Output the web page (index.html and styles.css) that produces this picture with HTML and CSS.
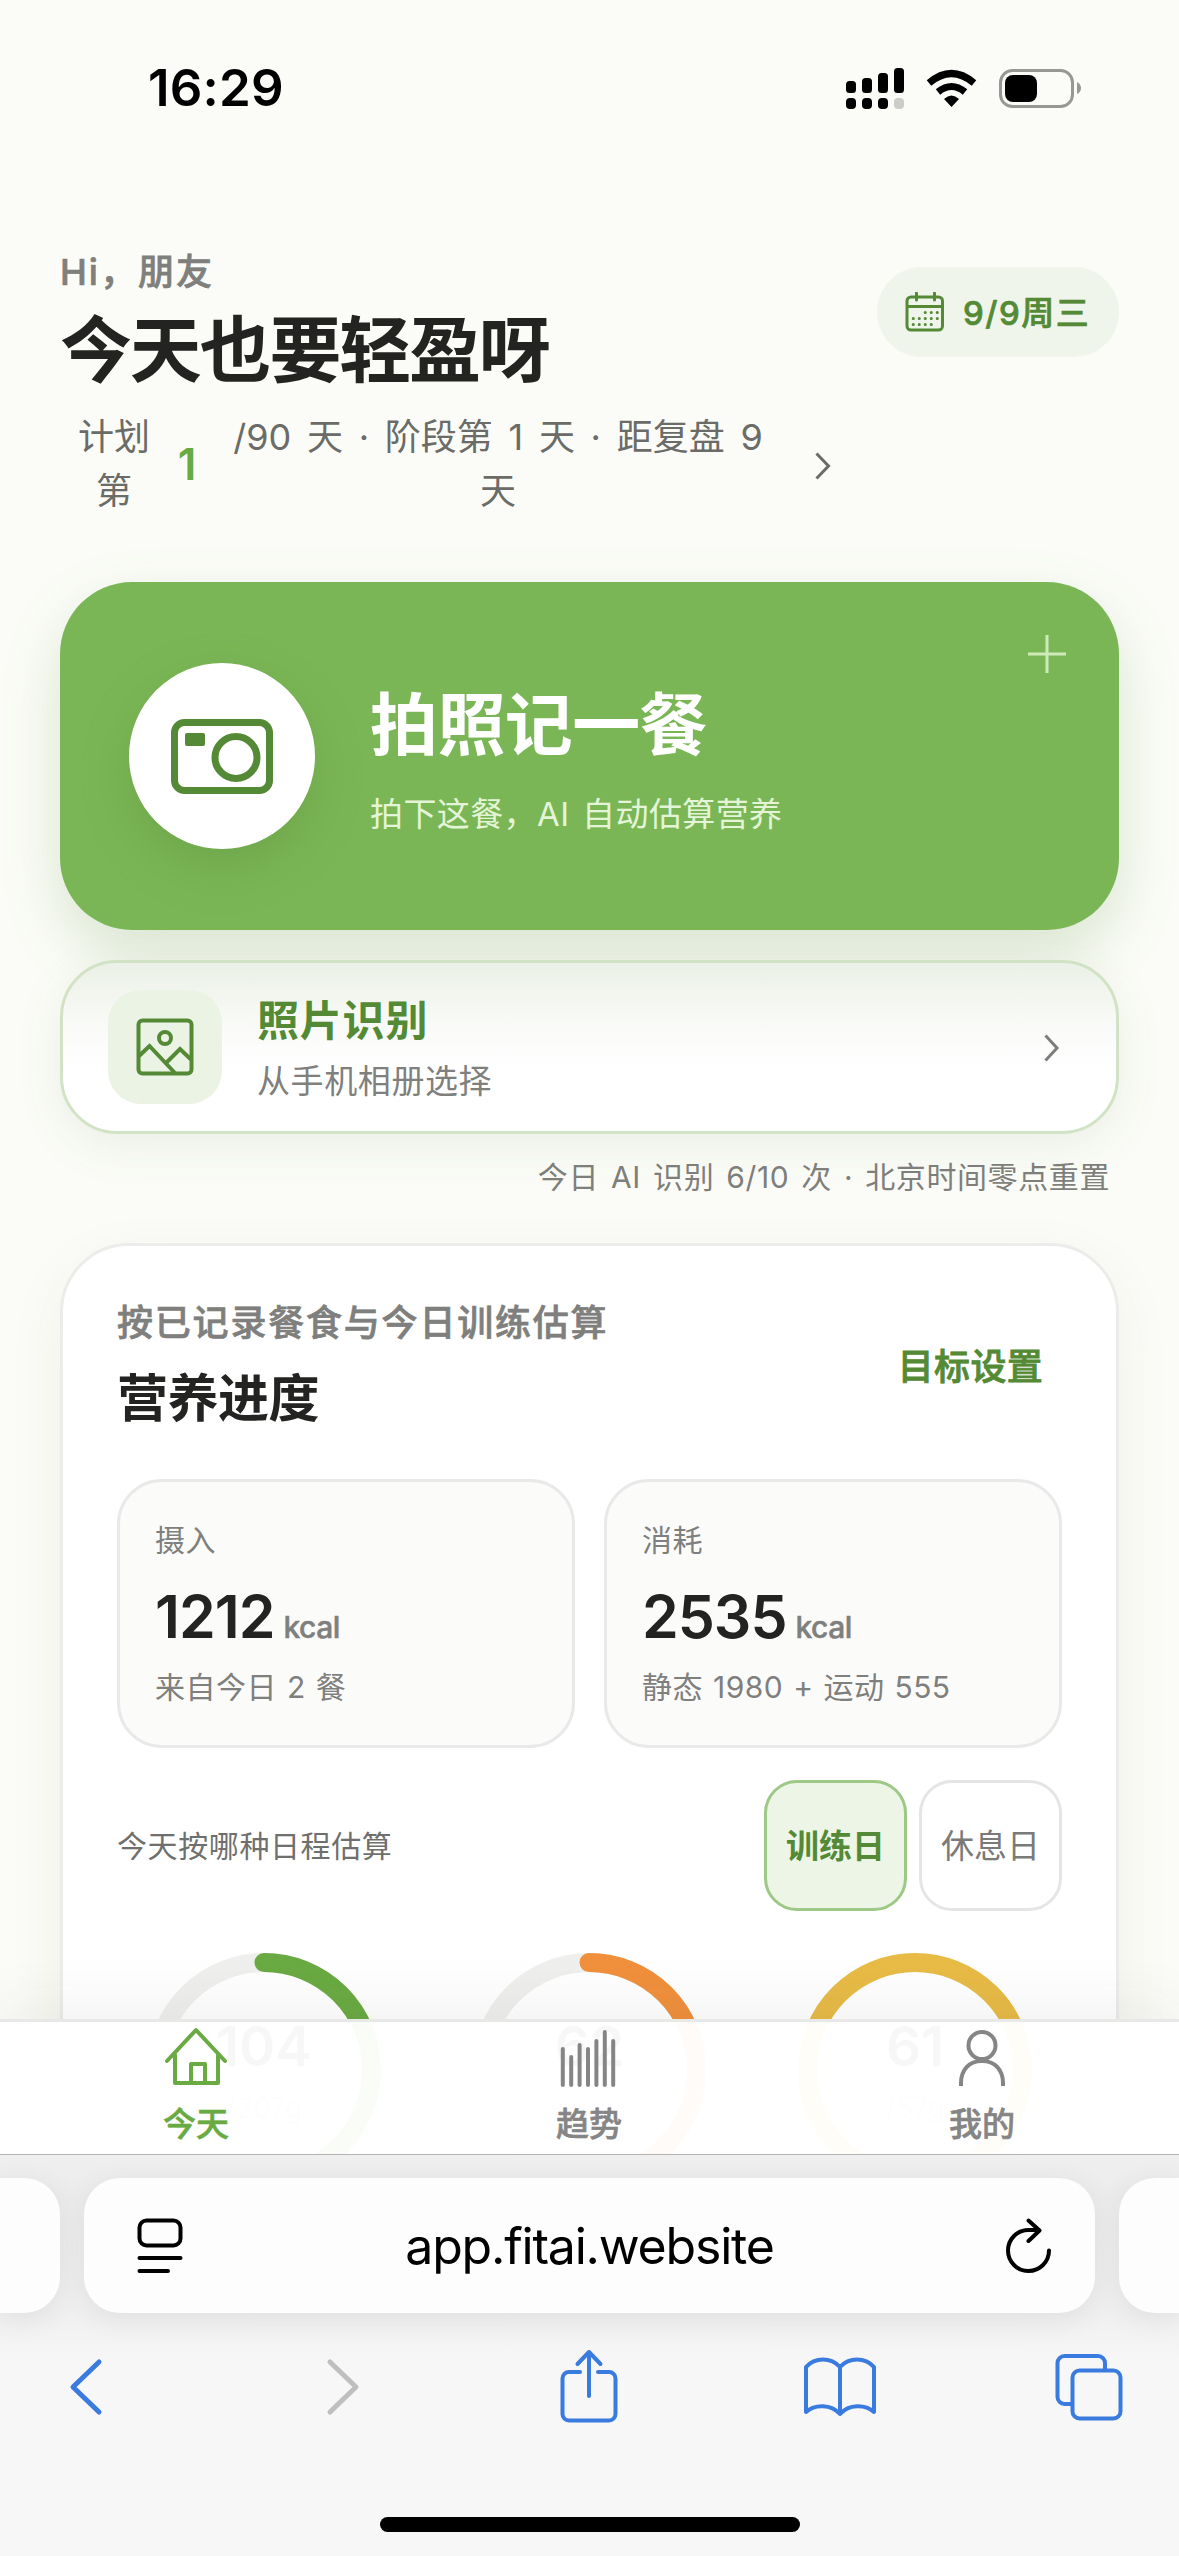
FILE: index.html
```html
<!DOCTYPE html>
<html lang="zh-CN">
<head>
<meta charset="utf-8">
<title>今天</title>
<link rel="stylesheet" href="styles.css">
</head>
<body>
<div class="app">
  <div class="status">
    <span class="time">16:29</span>
    <svg class="status-icons" width="236" height="42" viewBox="0 0 236 42">
      <g fill="#000">
        <rect x="0" y="14" width="10" height="12" rx="3.5"/><rect x="16" y="11" width="10" height="15" rx="3.5"/>
        <rect x="32" y="6" width="10" height="20" rx="3.5"/><rect x="48" y="1" width="10" height="25" rx="3.5"/>
        <rect x="0" y="31" width="10" height="11" rx="4"/><rect x="16" y="31" width="10" height="11" rx="4"/>
        <rect x="32" y="31" width="10" height="11" rx="4"/><rect x="48" y="31" width="10" height="11" rx="4" fill="#ccccca"/>
      </g>
      <g fill="none" stroke="#000" stroke-width="7">
        <path d="M83 16 Q105.500 -3 128 16"/><path d="M92 25 Q105.500 14 119 25"/>
      </g>
      <path d="M98 32 Q105.500 25 113 32 L105.500 40z"/>
      <rect x="154.500" y="3.500" width="72" height="36" rx="12" fill="none" stroke="#979795" stroke-width="3"/>
      <rect x="159" y="8" width="32" height="27" rx="8"/>
      <path d="M231 15 Q235 17 235 21 Q235 25 231 27z" fill="#979795"/>
    </svg>
  </div>

  <header class="header">
    <div class="greeting">
      <p class="hi">Hi，朋友</p>
      <h1 class="headline">今天也要轻盈呀</h1>
      <div class="plan">
        <span class="plan-label">计划第</span>
        <strong class="plan-day">1</strong>
        <span class="plan-text">/90 天 · 阶段第 1 天 · 距复盘 9 天</span>
        <svg class="plan-arrow" width="17" height="30" viewBox="0 0 17 30"><path d="M2.500 2.500 14.500 15 2.500 27.500" fill="none" stroke="#6b6b68" stroke-width="3"/></svg>
      </div>
    </div>
    <div class="date-pill">
      <svg width="40" height="40" viewBox="0 0 40 40" fill="none" stroke="#548a35" stroke-width="3">
        <rect x="2" y="5" width="35.500" height="33" rx="4"/><path d="M2 14.500H37.500"/><path d="M11.500 1V8M29.500 1V8" stroke-linecap="round"/>
        <path d="M20.200 20.500h.1M26.200 20.500h.1M32.200 20.500h.1M8.200 26.500h.1M14.200 26.500h.1M20.200 26.500h.1M26.200 26.500h.1M32.200 26.500h.1M8.200 32.500h.1M14.200 32.500h.1M20.200 32.500h.1M26.200 32.500h.1" stroke-linecap="round"/>
      </svg>
      <span>9/9周三</span>
    </div>
  </header>

  <section class="capture">
    <div class="capture-icon">
      <svg width="102" height="75" viewBox="0 0 102 75" fill="none" stroke="#548a35" stroke-width="7">
        <rect x="3.500" y="3.500" width="95" height="68" rx="10"/><circle cx="65" cy="38.500" r="21"/>
        <rect x="14" y="14" width="20" height="13" rx="2" fill="#548a35" stroke="none"/>
      </svg>
    </div>
    <div class="capture-copy">
      <h2 class="capture-title">拍照记一餐</h2>
      <p class="capture-sub">拍下这餐，AI 自动估算营养</p>
    </div>
    <svg class="capture-plus" width="40" height="40" viewBox="0 0 40 40"><path d="M20 1V39M1 20H39" stroke="#cdeab8" stroke-width="3"/></svg>
  </section>

  <section class="album">
    <div class="album-icon">
      <svg width="58" height="58" viewBox="0 0 58 58" fill="none" stroke="#548a35" stroke-width="4">
        <rect x="2.500" y="2.500" width="53" height="53" rx="4"/><circle cx="29" cy="20" r="6"/>
        <path d="M3 38 13.500 28 39 55M30 45 44 31 55 41.500"/>
      </svg>
    </div>
    <div class="album-copy">
      <h3 class="album-title">照片识别</h3>
      <p class="album-sub">从手机相册选择</p>
    </div>
    <svg class="album-arrow" width="17" height="30" viewBox="0 0 17 30"><path d="M2.500 2.500 14 15 2.500 27.500" fill="none" stroke="#7d7d7b" stroke-width="3"/></svg>
  </section>
  <p class="quota">今日 AI 识别 6/10 次 · 北京时间零点重置</p>

  <section class="nutrition">
    <div class="nutrition-head">
      <div>
        <p class="nutrition-note">按已记录餐食与今日训练估算</p>
        <h2 class="nutrition-title">营养进度</h2>
      </div>
      <a class="goal-link">目标设置</a>
    </div>
    <div class="stats">
      <div class="stat">
        <p class="stat-text">摄入</p>
        <p class="stat-value">1212<small>kcal</small></p>
        <p class="stat-text">来自今日 2 餐</p>
      </div>
      <div class="stat">
        <p class="stat-text">消耗</p>
        <p class="stat-value">2535<small>kcal</small></p>
        <p class="stat-text">静态 1980 + 运动 555</p>
      </div>
    </div>
    <div class="schedule">
      <span class="schedule-label">今天按哪种日程估算</span>
      <div class="toggle">
        <button class="choice choice-on">训练日</button>
        <button class="choice">休息日</button>
      </div>
    </div>
    <div class="rings">
      <div class="ring">
        <svg width="234" height="234" viewBox="0 0 234 234" fill="none" stroke-width="19"><circle cx="117" cy="117" r="107.500" stroke="#efefed"/><path d="M117 9.500A107.500 107.500 0 0 1 117 224.500" stroke="#6aaa42" stroke-linecap="round"/></svg>
        <div class="ring-text"><b>104</b><small>/207g</small></div>
      </div>
      <div class="ring">
        <svg width="234" height="234" viewBox="0 0 234 234" fill="none" stroke-width="19"><circle cx="117" cy="117" r="107.500" stroke="#efefed"/><path d="M117 9.500A107.500 107.500 0 0 1 117 224.500" stroke="#f0903c" stroke-linecap="round"/></svg>
        <div class="ring-text"><b>62</b></div>
      </div>
      <div class="ring">
        <svg width="234" height="234" viewBox="0 0 234 234" fill="none" stroke-width="19"><circle cx="117" cy="117" r="107.500" stroke="#e8bb46"/></svg>
        <div class="ring-text"><b>61</b><small>/57g</small></div>
      </div>
    </div>
  </section>

  <nav class="tabs">
    <a class="tab tab-on">
      <svg width="64" height="60" viewBox="0 0 64 60" fill="none" stroke="#6aaa42" stroke-width="4" stroke-linecap="round" stroke-linejoin="round"><path d="M3 34 32 3 61 34M11 28V56H54V28M27 56V37H41V56"/></svg>
      <span>今天</span>
    </a>
    <a class="tab">
      <svg width="64" height="60" viewBox="0 0 64 60" fill="none" stroke="#858585" stroke-width="4" stroke-linecap="round"><path d="M5.800 22V58M14.200 30V58M22.600 18V58M31 22V58M39.400 14V58M47.800 5V58M56.200 14V58"/></svg>
      <span>趋势</span>
    </a>
    <a class="tab">
      <svg width="64" height="60" viewBox="0 0 64 60" fill="none" stroke="#858585" stroke-width="4"><circle cx="32" cy="18.500" r="13.500"/><path d="M11 59V56C11 43 19 34 32 34S53 43 53 56V59"/></svg>
      <span>我的</span>
    </a>
  </nav>
</div>

<footer class="browser">
  <div class="address-row">
    <div class="page-edge page-edge-left"></div>
    <div class="address">
      <svg width="46" height="56" viewBox="0 0 46 56" fill="none" stroke="#000" stroke-width="4" stroke-linecap="round"><rect x="2.500" y="2.500" width="41" height="25" rx="7"/><path d="M2.500 40H43.500M2.500 53H31"/></svg>
      <span class="address-url">app.fitai.website</span>
      <svg width="48" height="56" viewBox="0 0 48 56" fill="none" stroke="#000" stroke-width="4" stroke-linecap="round" stroke-linejoin="round"><path d="M44 32.500A20.500 20.500 0 1 1 23.500 12H34M23.500 2.500 34.500 12.500 23.500 23"/></svg>
    </div>
    <div class="page-edge page-edge-right"></div>
  </div>
  <div class="toolbar">
    <svg width="36" height="60" viewBox="0 0 36 60" fill="none" stroke="#3a7be0" stroke-width="5" stroke-linecap="round" stroke-linejoin="round"><path d="M31 5 5 30 31 55"/></svg>
    <svg class="tool-forward" width="36" height="60" viewBox="0 0 36 60" fill="none" stroke="#bfbfbf" stroke-width="5" stroke-linecap="round" stroke-linejoin="round"><path d="M5 5 31 30 5 55"/></svg>
    <svg class="tool-share" width="58" height="74" viewBox="0 0 58 74" fill="none" stroke="#3a7be0" stroke-width="4" stroke-linecap="round" stroke-linejoin="round"><path d="M20 23H9A6.500 6.500 0 0 0 2.500 29.500V65A6.500 6.500 0 0 0 9 71.500H49A6.500 6.500 0 0 0 55.500 65V29.500A6.500 6.500 0 0 0 49 23H38M29 47V3M17.500 15 29 3 40.500 15"/></svg>
    <svg class="tool-book" width="74" height="62" viewBox="0 0 74 62" fill="none" stroke="#3a7be0" stroke-width="4" stroke-linecap="round" stroke-linejoin="round"><path d="M37 11C28 1 12 1 3 11V56C12 48 28 48 37 58C46 48 62 48 71 56V11C62 1 46 1 37 11ZM37 11V58"/></svg>
    <svg class="tool-tabs" width="68" height="68" viewBox="0 0 68 68" fill="none" stroke="#3a7be0" stroke-width="4"><path d="M17 51H9.500A7 7 0 0 1 2.500 44V10A7 7 0 0 1 9.500 3H43A7 7 0 0 1 50 10V17"/><rect x="17.500" y="17.500" width="48" height="48" rx="7"/></svg>
  </div>
  <div class="home-bar"></div>
</footer>
</body>
</html>
```
FILE: styles.css
```css
* { box-sizing: border-box; margin: 0; padding: 0; }

body {
  width: 1179px;
  height: 2556px;
  overflow: hidden;
  display: flex;
  flex-direction: column;
  background: #fbfcf7;
  color: #232321;
  font-family: Inter, "Noto Sans CJK SC", sans-serif;
}

svg { display: block; flex: none; }

.app {
  position: relative;
  height: 2155px;
  flex: none;
  overflow: hidden;
  padding: 0 60px;
}

/* status bar */
.status {
  display: flex;
  align-items: center;
  justify-content: space-between;
  height: 174px;
  padding: 2px 37px 0 88px;
}
.time { margin-top: -2px; font-size: 51px; font-weight: 600; letter-spacing: 0.2px; color: #000; }

/* greeting */
.header {
  display: flex;
  align-items: flex-start;
  justify-content: space-between;
  padding-top: 75px;
}
.hi {
  margin-top: -2px;
  font-size: 36px;
  line-height: 50px;
  font-weight: 500;
  letter-spacing: 2px;
  color: #7f7f7c;
  -webkit-text-stroke: 0.7px;
}
.headline { margin-top: 8px; font-size: 72px; line-height: 90px; font-weight: 700; letter-spacing: -2.2px; }
.plan {
  display: flex;
  align-items: center;
  margin-top: 15px;
  padding-left: 17px;
  font-size: 36px;
  line-height: 54px;
  text-align: center;
  color: #6b6b68;
}
.plan-label { width: 74px; }
.plan-day { width: 22px; margin-left: 25px; font-size: 44px; font-weight: 600; color: #6aaa42; }
.plan-text { width: 546px; margin-left: 27px; word-spacing: 5.600px; }
.plan-arrow { margin: 4px 0 0 43px; }
.date-pill {
  display: flex;
  align-items: center;
  gap: 18px;
  width: 242px;
  height: 90px;
  margin-top: 18px;
  padding-left: 28px;
  border-radius: 45px;
  background: #eff5ea;
  color: #548a35;
  font-size: 33px;
  font-weight: 500;
  letter-spacing: 1.5px;
  white-space: nowrap;
  -webkit-text-stroke: 0.7px;
}
.date-pill span { margin-top: -2px; }

/* meal capture */
.capture {
  position: relative;
  display: flex;
  align-items: center;
  gap: 55px;
  height: 348px;
  margin-top: 64px;
  padding-left: 69px;
  border-radius: 72px;
  background: #7bb656;
  box-shadow: 0 24px 60px rgba(84, 138, 53, 0.2);
}
.capture-icon {
  display: flex;
  align-items: center;
  justify-content: center;
  width: 186px;
  height: 186px;
  border-radius: 50%;
  background: #fff;
  box-shadow: 0 18px 48px rgba(84, 138, 53, 0.32);
}
.capture-copy { padding-top: 9px; }
.capture-title { font-size: 68px; line-height: 84px; font-weight: 700; letter-spacing: -0.6px; color: #fff; }
.capture-sub { margin-top: 23px; font-size: 33px; line-height: 48px; letter-spacing: 0.4px; word-spacing: 3px; color: #e3f5d6; }
.capture-plus { position: absolute; top: 52px; right: 52px; }

/* album */
.album {
  position: relative;
  display: flex;
  align-items: center;
  height: 174px;
  margin-top: 30px;
  padding: 0 56px 0 45px;
  border: 3px solid #d1e2c5;
  border-radius: 57px;
  background: linear-gradient(#ebf1e6, #fafbf9 40%, #fff 65%);
  box-shadow: 0 12px 48px rgba(70, 100, 50, 0.09);
}
.album-icon {
  display: flex;
  align-items: center;
  justify-content: center;
  width: 114px;
  height: 114px;
  border-radius: 33px;
  background: #ebf3e4;
}
.album-copy { flex: 1; padding: 7px 0 0 35px; }
.album-title { font-size: 42px; line-height: 60px; font-weight: 700; letter-spacing: 0.8px; color: #548a35; }
.album-sub { font-size: 33px; line-height: 60px; letter-spacing: 0.6px; color: #7f7f7d; }
.album-arrow { margin-top: 2px; }
.quota {
  margin-top: 23px;
  padding-right: 9px;
  text-align: right;
  font-size: 30px;
  line-height: 40px;
  letter-spacing: 0.6px;
  word-spacing: 3px;
  color: #7f7f7c;
}

/* nutrition */
.nutrition {
  height: 1000px;
  margin-top: 46px;
  padding: 51px 54px 0;
  border: 3px solid #ececea;
  border-radius: 69px;
  background: #fff;
  box-shadow: 0 18px 60px rgba(60, 70, 40, 0.06);
}
.nutrition-head { display: flex; align-items: center; justify-content: space-between; }
.nutrition-note {
  padding-top: 2px;
  font-size: 36px;
  line-height: 48px;
  font-weight: 500;
  letter-spacing: 1.8px;
  color: #7f7f7d;
  -webkit-text-stroke: 0.7px;
}
.nutrition-title { margin-top: 21px; font-size: 51px; line-height: 61px; font-weight: 700; letter-spacing: -0.5px; }
.goal-link { padding: 2px 19px 0 0; font-size: 36px; font-weight: 500; letter-spacing: 0.3px; color: #548a35; -webkit-text-stroke: 0.8px; }
.stats { display: grid; grid-template-columns: 1fr 1fr; gap: 29px; margin-top: 50px; }
.stat {
  display: flex;
  flex-direction: column;
  height: 269px;
  padding: 40px 35px 0;
  border: 3px solid #e9e9e9;
  border-radius: 45px;
  background: #fbfbfa;
}
.stat-text { font-size: 30px; line-height: 36px; letter-spacing: 0.5px; word-spacing: 1px; color: #7f7f7d; }
.stat-value { height: 64px; margin: 27px 0 20px; font-size: 59px; line-height: 64px; font-weight: 600; letter-spacing: -1px; }
.stat-value small { margin-left: 9px; font-size: 30px; font-weight: 500; letter-spacing: -0.5px; color: #7f7f7d; -webkit-text-stroke: 0.5px; }
.schedule { display: flex; align-items: center; justify-content: space-between; margin-top: 32px; }
.schedule-label { margin-top: -4px; font-size: 30px; letter-spacing: 0.6px; color: #6f6f6d; }
.toggle { display: flex; gap: 12px; }
.choice {
  width: 143px;
  height: 131px;
  padding-bottom: 3px;
  border: 3px solid #e5e5e4;
  border-radius: 33px;
  background: #fff;
  font: inherit;
  font-size: 33px;
  color: #7a7a78;
}
.choice-on { border-color: #9ec886; background: #edf5e7; font-weight: 600; color: #548a35; }
.rings { display: grid; grid-template-columns: repeat(3, 1fr); gap: 32px; margin-top: 42px; }
.ring { position: relative; display: flex; justify-content: center; }
.ring-text {
  position: absolute;
  inset: 60px 0 0;
  display: flex;
  flex-direction: column;
  align-items: center;
}
.ring-text b { font-size: 55px; line-height: 66px; font-weight: 600; }
.ring-text small { margin-top: 12px; font-size: 28px; color: #c9c9c7; }

.tabs {
  position: absolute;
  left: 0;
  right: 0;
  bottom: 0;
  display: grid;
  grid-template-columns: repeat(3, 1fr);
  height: 136px;
  border-top: 3px solid #e8e8e6;
  border-bottom: 1px solid #b3b3b3;
  background: rgba(255, 255, 255, 0.965);
  box-shadow: 0 -12px 60px rgba(60, 60, 60, 0.07);
}
.tab {
  display: flex;
  flex-direction: column;
  align-items: center;
  padding: 5px 1px 0 0;
  font-size: 33px;
  line-height: 44px;
  font-weight: 500;
  color: #858585;
  -webkit-text-stroke: 0.6px;
}
.tab span { margin-top: 15px; }
.tab-on { color: #6aaa42; }

/* browser chrome */
.browser {
  display: flex;
  flex-direction: column;
  align-items: center;
  flex: 1;
  background: linear-gradient(#efefef, #ececec 40px, #f0f0f0 160px, #f7f7f7 210px);
}
.address-row { display: flex; gap: 24px; width: 1179px; padding-top: 23px; }
.page-edge { height: 135px; background: #fdfdfd; box-shadow: 0 6px 30px rgba(0, 0, 0, 0.07); }
.page-edge-left { width: 60px; border-radius: 0 36px 36px 0; }
.page-edge-right { flex: 1; border-radius: 36px 0 0 36px; }
.address {
  display: flex;
  align-items: center;
  justify-content: space-between;
  width: 1011px;
  height: 135px;
  padding: 0 42px 0 53px;
  border-radius: 36px;
  background: #fdfdfd;
  box-shadow: 0 6px 30px rgba(0, 0, 0, 0.07);
  font-size: 50px;
  letter-spacing: -1.2px;
  color: #000;
}
.address-url { margin-right: 9px; }
.toolbar {
  display: flex;
  align-items: center;
  width: 1179px;
  height: 76px;
  margin-top: 36px;
  padding-left: 68px;
}
.tool-forward { margin-left: 221px; }
.tool-share { margin: -3px 0 0 199px; }
.tool-book { margin-left: 185px; }
.tool-tabs { margin-left: 178px; }
.home-bar { width: 420px; height: 15px; margin-top: 92px; border-radius: 8px; background: #000; }
```
